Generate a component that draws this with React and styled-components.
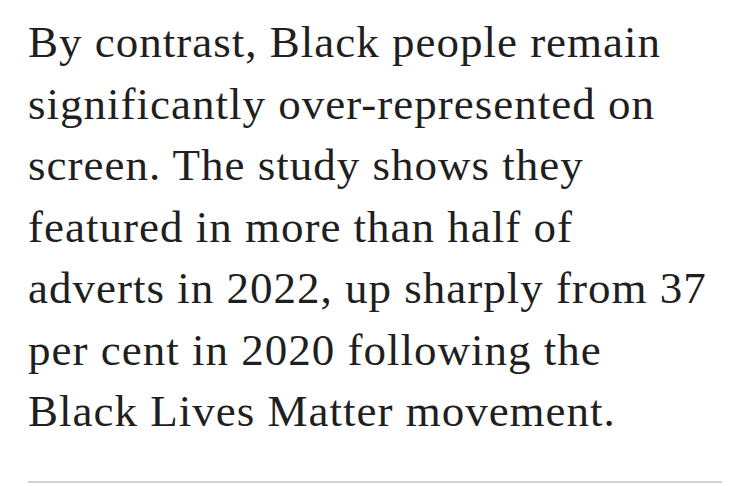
import React from "react";
import styled, { createGlobalStyle } from "styled-components";

const GlobalStyle = createGlobalStyle`
  html, body {
    margin: 0;
    padding: 0;
    background: #ffffff;
  }
`;

const Article = styled.article`
  width: 750px;
  height: 486px;
  box-sizing: border-box;
  padding: 12px 28px 0 28px;
  display: flex;
  flex-direction: column;
  overflow: hidden;
`;

const Paragraph = styled.p`
  margin: 0;
  font-family: "Liberation Serif", "Times New Roman", serif;
  font-size: 45px;
  letter-spacing: 1px;
  line-height: 61.5px;
  color: #1f1f1f;
  white-space: nowrap;
`;

const Rule = styled.hr`
  margin: 38px 0 0 0;
  border: none;
  height: 2px;
  background: #d3d3d3;
`;

const lines = [
  "By contrast, Black people remain",
  "significantly over-represented on",
  "screen. The study shows they",
  "featured in more than half of",
  "adverts in 2022, up sharply from 37",
  "per cent in 2020 following the",
  "Black Lives Matter movement.",
];

export default function App() {
  return (
    <>
      <GlobalStyle />
      <Article>
        <Paragraph>
          {lines.map((line, i) => (
            <React.Fragment key={i}>
              {line}
              {i < lines.length - 1 && <br />}
            </React.Fragment>
          ))}
        </Paragraph>
        <Rule />
      </Article>
    </>
  );
}
